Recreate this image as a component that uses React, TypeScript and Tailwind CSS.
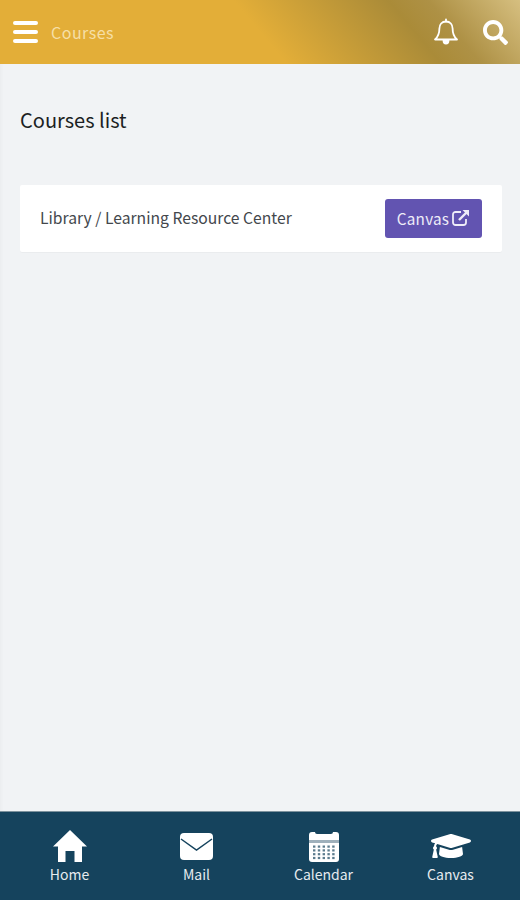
import { FaGraduationCap, FaSearch } from "react-icons/fa";

function Bell() {
  return (
    <svg viewBox="0 0 26 28" className="w-[26px] h-[28px]" fill="none" stroke="white" strokeWidth="1.800" strokeLinejoin="round" strokeLinecap="round">
      <path d="M13 3.500c-4.200 0-6.600 3-6.600 7 0 5.600-1.400 8.400-4.400 11h22c-3-2.600-4.400-5.400-4.400-11 0-4-2.400-7-6.600-7z" />
      <path d="M13 1.500v2" />
      <path d="M10.500 22.500c0 2 1 3 2.500 3s2.500-1 2.500-3z" fill="white" />
    </svg>
  );
}

function Home() {
  return (
    <svg viewBox="0 0 34 32" className="w-[34px] h-[32px]" fill="white">
      <path d="M17 0 34 16.500h-5V32h-7.500V21h-9v11H5V16.500H0z" />
    </svg>
  );
}

function Mail() {
  return (
    <svg viewBox="0 0 33 27" className="w-[33px] h-[27px]">
      <rect width="33" height="27" rx="4" fill="white" />
      <path d="M1 6 16.500 17 32 6" fill="none" stroke="#15435d" strokeWidth="1.500" />
    </svg>
  );
}

function Calendar() {
  const cells = [];
  for (let r = 0; r < 4; r++) {
    for (let c = 0; c < 5; c++) {
      cells.push(<rect key={`${r}-${c}`} x={4 + c * 4.8} y={15.5 + r * 3.8} width="2.400" height="2.200" fill="#15435d" opacity="0.7" />);
    }
  }
  return (
    <svg viewBox="0 0 30 32" className="w-[30px] h-[32px]">
      <path d="M3 2h3a2 2 0 0 0 2 2h14a2 2 0 0 0 2-2h3a3 3 0 0 1 3 3v5H0V5a3 3 0 0 1 3-3z" fill="white" />
      <rect y="10" width="30" height="3" fill="#9fb0bb" />
      <path d="M0 13h30v16a3 3 0 0 1-3 3H3a3 3 0 0 1-3-3z" fill="white" />
      {cells}
    </svg>
  );
}

const tabs = [
  { label: "Home", icon: <Home /> },
  { label: "Mail", icon: <Mail /> },
  { label: "Calendar", icon: <Calendar /> },
  { label: "Canvas", icon: <FaGraduationCap className="w-[40px] h-[36px]" /> },
];

function External() {
  return (
    <svg viewBox="0 0 18 17" className="w-[18px] h-[17px] mb-[3px]" fill="none" stroke="currentColor" strokeWidth="1.800">
      <path d="M9 3H3.500A2.500 2.500 0 0 0 1 5.500v8A2.500 2.500 0 0 0 3.500 16h8a2.500 2.500 0 0 0 2.500-2.500V10" />
      <path d="M7 11 15 3" strokeWidth="2.400" />
      <path d="M10.500 1H17v6.500z" fill="currentColor" stroke="none" />
    </svg>
  );
}

export default function App() {
  return (
    <div className="w-[520px] h-[900px] flex flex-col bg-[#f1f3f5] font-['Noto_Sans_CJK_JP','Noto_Sans',sans-serif]">
      <header className="h-[64px] shrink-0 flex items-center pl-[13px] pr-[12px] bg-[linear-gradient(50deg,#e3ae38_0%,#e3ae38_50%,#aa8b38_77%,#ae9145_84%,#d6bf80_100%)]">
        <div className="w-[25px] flex flex-col gap-[5px]">
          <span className="h-[4px] rounded-full bg-white" />
          <span className="h-[4px] rounded-full bg-white" />
          <span className="h-[4px] rounded-full bg-white" />
        </div>
        <span className="ml-[13px] text-[16px] tracking-[0.5px] text-[#f6dfa6]">Courses</span>
        <div className="ml-auto flex items-center gap-[24px] text-white">
          <Bell />
          <FaSearch className="w-[25px] h-[25px]" />
        </div>
      </header>
      <main className="flex-1 pl-[20px] pr-[18px] pt-[42px] shadow-[inset_4px_0_3px_-2px_rgba(0,0,0,0.025)]">
        <h1 className="text-[20px] leading-[28px] text-[#1c1f23]">Courses list</h1>
        <div className="mt-[51px] h-[67px] flex items-center justify-between pl-[20px] pr-[20px] bg-white rounded-[2px] shadow-[0_1px_1px_rgba(0,0,0,0.03)]">
          <span className="text-[15.700px] mb-[2px] text-[#43474c]">Library / Learning Resource Center</span>
          <button className="h-[39px] w-[97px] flex items-center justify-center gap-[3px] rounded-[3px] bg-[#6254b1] text-[#eeecf8] text-[15.300px] tracking-[0.2px]">
            Canvas
            <External />
          </button>
        </div>
      </main>
      <nav className="h-[89px] shrink-0 grid grid-cols-4 pt-[17px] px-[6px] bg-[#15435d] border-t border-[#7d929d] text-white">
        {tabs.map((t) => (
          <div key={t.label} className="flex flex-col items-center">
            <div className="h-[34px] flex items-center justify-center">{t.icon}</div>
            <span className="mt-[1px] text-[14px] leading-[20px] text-[#e6ebef]">{t.label}</span>
          </div>
        ))}
      </nav>
    </div>
  );
}
